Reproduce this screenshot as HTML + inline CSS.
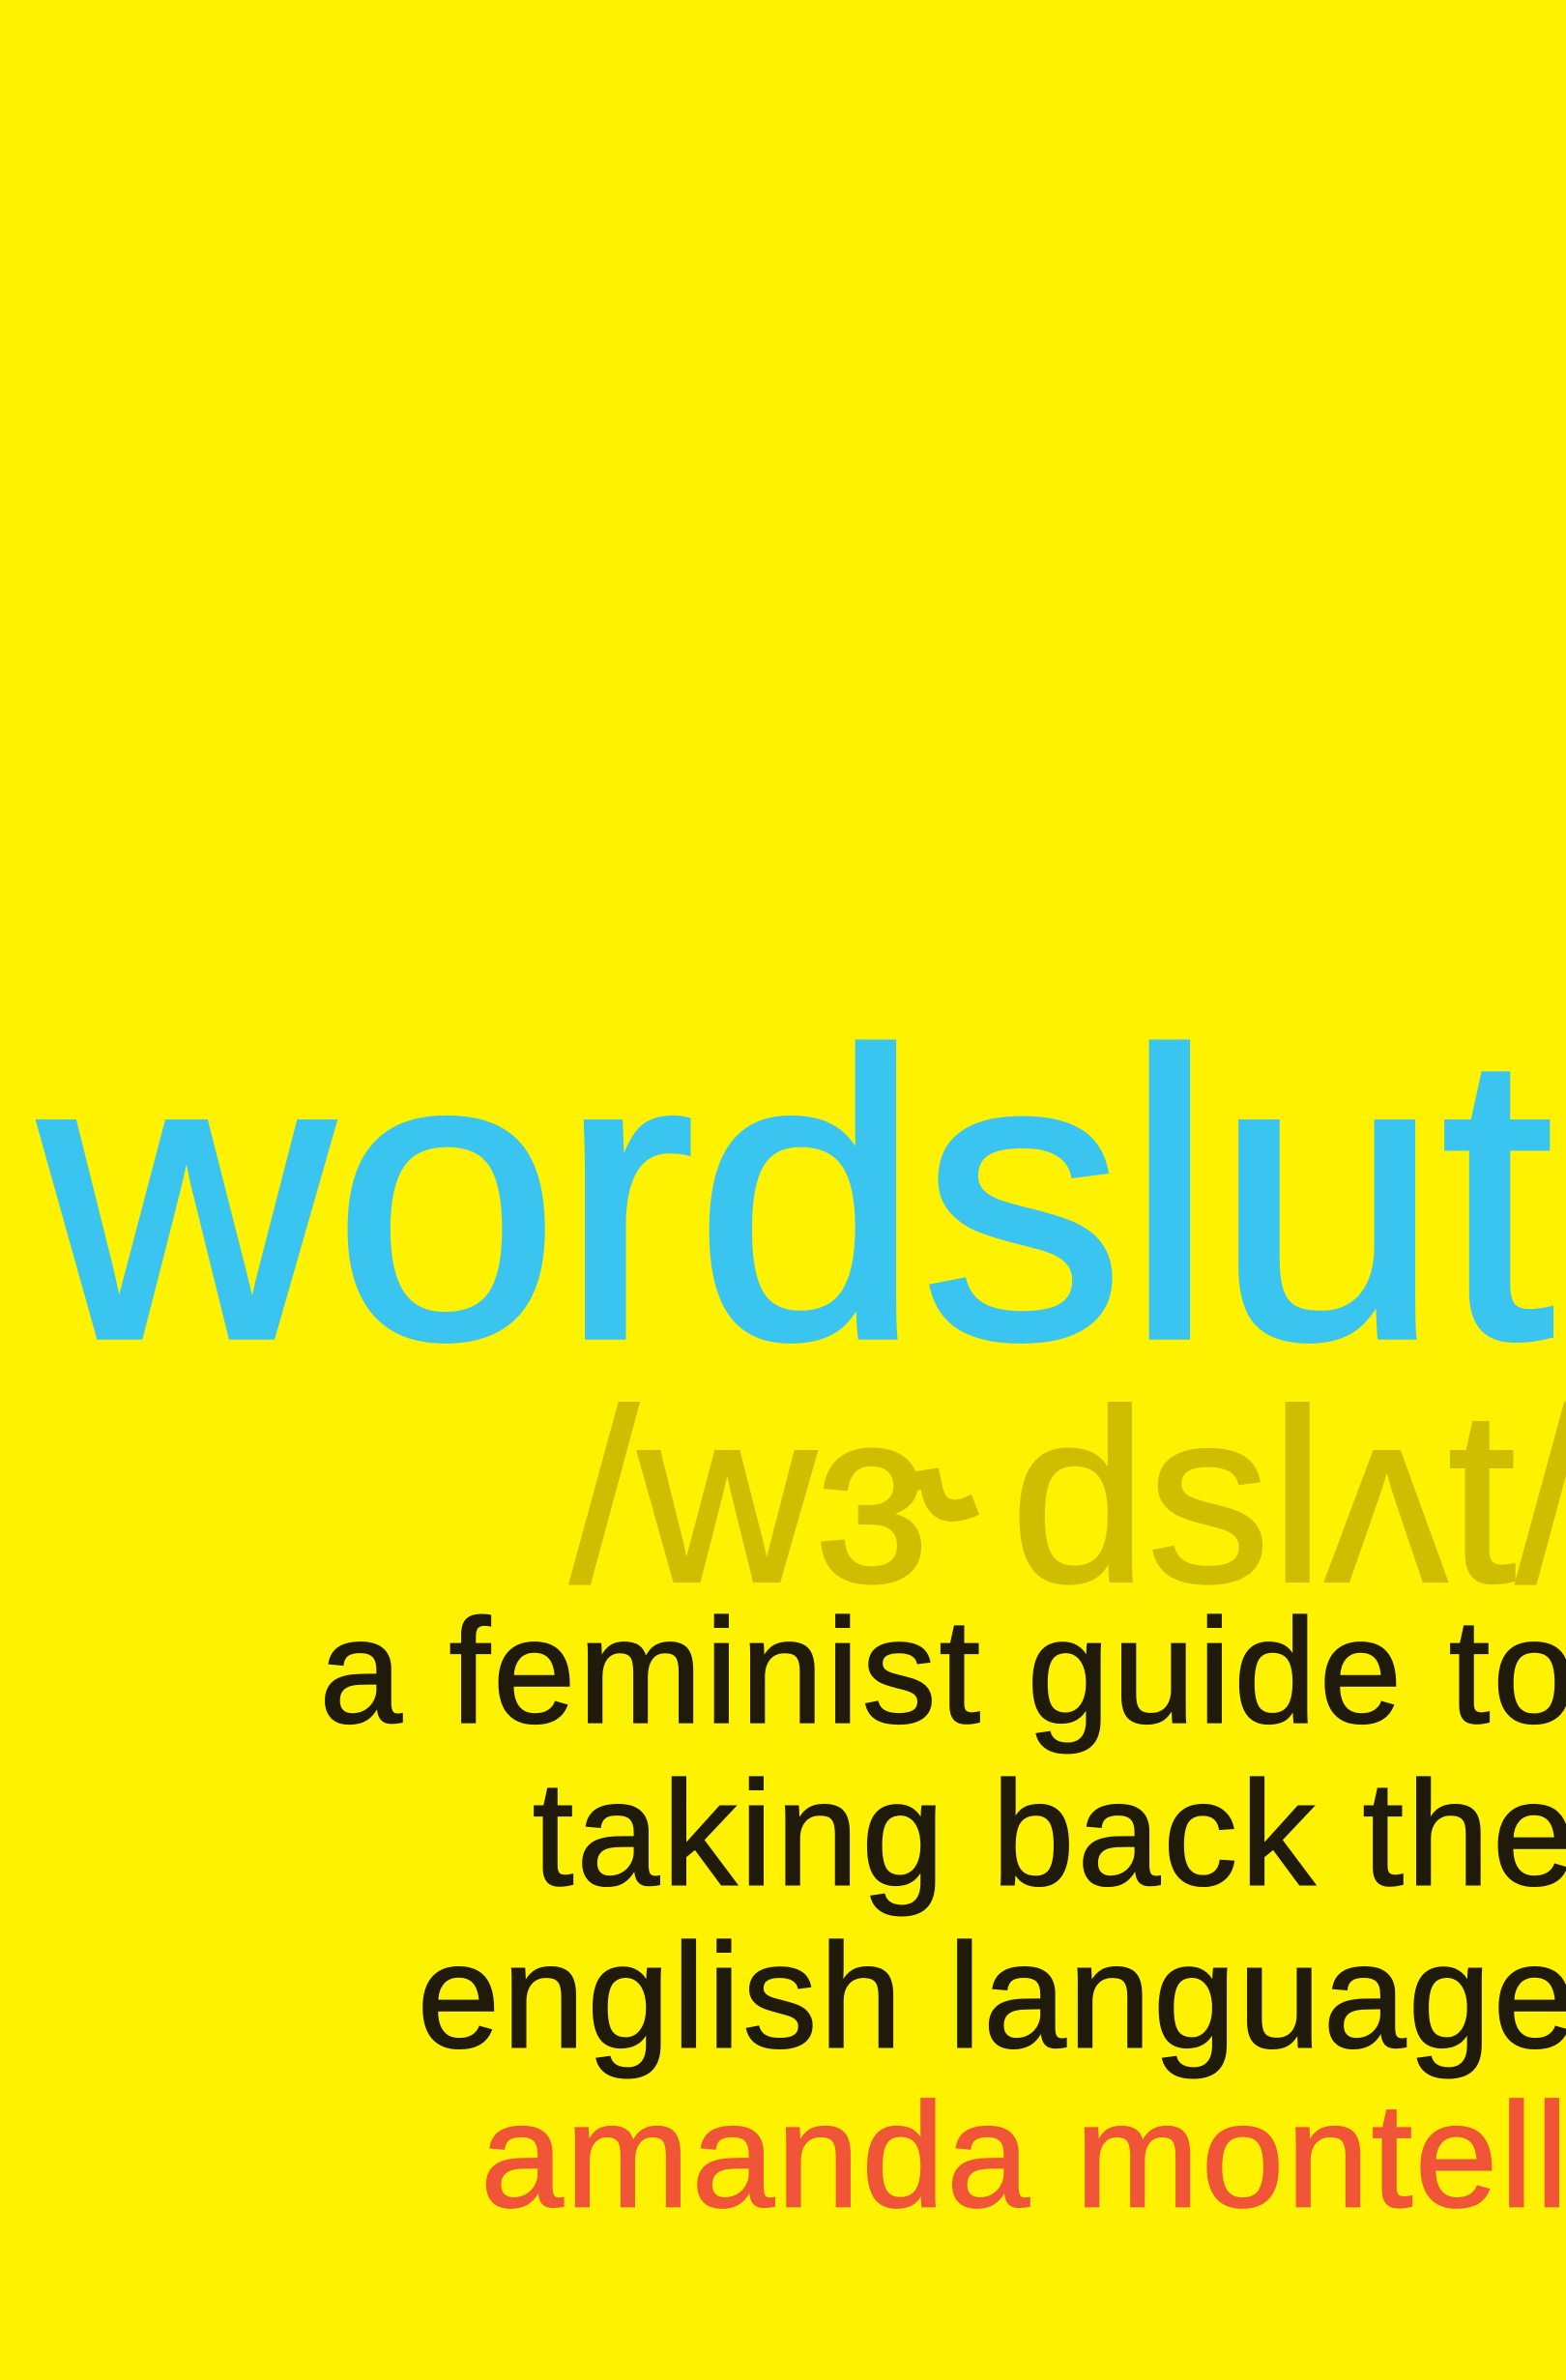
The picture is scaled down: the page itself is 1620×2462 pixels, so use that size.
<!DOCTYPE html>
<html><head><meta charset="utf-8"><style>
html,body{margin:0;padding:0;}
body{width:1620px;height:2462px;overflow:hidden;background:#fff200;}
#w{position:absolute;left:0;top:0;width:1032px;height:1568px;transform:scale(1.5698);transform-origin:0 0;overflow:hidden;font-family:"Liberation Sans","DejaVu Sans",sans-serif;}
.t{position:absolute;white-space:nowrap;line-height:1;}
.r{text-align:right;}
.s{-webkit-text-stroke:1.1px currentColor;letter-spacing:1.5px;}
</style></head><body><div id="w">
<div class="t" style="left:26px;top:654px;font-size:268px;color:#3ac5f0;letter-spacing:0px;-webkit-text-stroke:3.5px #3ac5f0;">wordslut</div>
<div class="t r" style="right:-12px;top:906px;font-size:162px;color:#cfbe00;-webkit-text-stroke:1.8px #cfbe00;">/wɜ˞dslʌt/</div>
<div class="t r s" style="right:-8px;top:1052px;font-size:98px;color:#1f1a0a;letter-spacing:1.8px;">a feminist guide to</div>
<div class="t r s" style="right:-8px;top:1159px;font-size:98px;color:#1f1a0a;letter-spacing:2px;">taking back the</div>
<div class="t r s" style="right:-8px;top:1266px;font-size:98px;color:#1f1a0a;">english language</div>
<div class="t r s" style="right:-3px;top:1371px;font-size:98px;color:#f05537;">amanda montell</div>
</div></body></html>
